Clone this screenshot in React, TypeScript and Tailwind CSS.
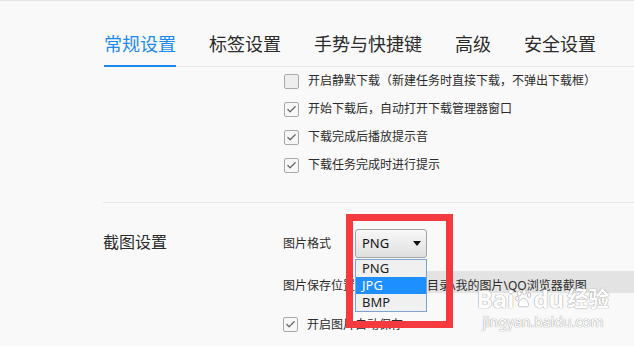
import { Check } from 'lucide-react'

const tabs = ['常规设置', '标签设置', '手势与快捷键', '高级', '安全设置']

const downloadOptions = [
  { label: '开启静默下载（新建任务时直接下载，不弹出下载框）', checked: false },
  { label: '开始下载后，自动打开下载管理器窗口', checked: true },
  { label: '下载完成后播放提示音', checked: true },
  { label: '下载任务完成时进行提示', checked: true },
]

const savePath = '：默认为系统目录\\我的图片\\QQ浏览器截图'

function CheckBox({ checked }: { checked: boolean }) {
  return (
    <span
      className={
        'flex h-[15px] w-[15px] shrink-0 items-center justify-center rounded-[2px] border border-[#a9a9a9] ' +
        (checked ? 'bg-[#f7f7f7]' : 'bg-[#eeeeee]')
      }
    >
      {checked && <Check size={11} strokeWidth={2.6} className="text-[#666]" />}
    </span>
  )
}

function FormatSelect() {
  const items = ['PNG', 'JPG', 'BMP']
  return (
    <div className="relative">
      <div className="flex h-[29px] w-[72px] items-center justify-between rounded-[3px] border border-[#a3a3a3] bg-gradient-to-b from-[#f7f7f7] to-[#e0e0e0] pl-[6px] pr-[5px] text-[13px] text-[#111]">
        <span>PNG</span>
        <span className="h-0 w-0 border-x-[4px] border-t-[5px] border-x-transparent border-t-[#111]" />
      </div>
      {/* open list */}
      <div className="absolute left-0 top-[30px] z-10 w-[72px] border border-[#7da2ce] bg-[#f0f0f0] text-[13px]">
        {items.map((it) => (
          <div
            key={it}
            className={
              'flex h-[17px] items-center pl-[6px] ' +
              (it === 'JPG' ? 'bg-[#1e8fff] text-white' : 'text-[#222]')
            }
          >
            {it}
          </div>
        ))}
      </div>
    </div>
  )
}

function Watermark() {
  return (
    <div className="pointer-events-none absolute left-[485px] top-[283px] z-30 flex w-[116px] flex-col items-center whitespace-nowrap text-white [text-shadow:0_0_1px_#9a9a9a,0_0_1px_#9a9a9a]">
      <div className="flex items-center text-[24px] font-bold leading-[29px]">
        <span>Bai</span>
        <svg width="17" height="19" viewBox="0 0 20 22" className="mx-[1px] shrink-0">
          <g fill="#fff" stroke="#b5b5b5" strokeWidth="0.9">
            <ellipse cx="5" cy="5" rx="2.2" ry="3" />
            <ellipse cx="11" cy="3.5" rx="2.2" ry="3" />
            <ellipse cx="16.5" cy="7" rx="2" ry="2.8" />
            <ellipse cx="2.5" cy="11" rx="2" ry="2.6" />
            <path d="M4 19c0-4 3-8 6-8s6 4 6 8c0 2-3 2-6 1.5C7 21 4 21 4 19z" />
          </g>
        </svg>
        <span>du</span>
        <span className="ml-[3px] text-[21px]">经验</span>
      </div>
      <div className="text-[14px] leading-[17px]">jingyan.baidu.com</div>
    </div>
  )
}

export default function App() {
  return (
    <div
      className="relative h-[346px] w-[634px] overflow-hidden border-t border-[#e3e3e3] bg-[#f9f9f9] text-[#2b2b2b]"
      style={{ fontFamily: '"Noto Sans", "Noto Sans CJK SC", sans-serif' }}
    >
      {/* tabs */}
      <div className="ml-[104px] flex gap-[33px] border-b border-[#e6e6e6] pt-[31px]">
        {tabs.map((t, i) => (
          <div
            key={t}
            className={
              '-mb-px border-b-2 pb-[9px] text-[18px] leading-[24px] ' +
              (i === 0 ? 'border-[#1b8af0] text-[#1b8af0]' : 'border-transparent text-[#2b2b2b]')
            }
          >
            {t}
          </div>
        ))}
      </div>

      {/* download options */}
      <div className="ml-[284px] flex flex-col text-[12px]">
        {downloadOptions.map((o) => (
          <label key={o.label} className="flex h-[28px] items-center gap-[9px]">
            <CheckBox checked={o.checked} />
            <span className="whitespace-nowrap">{o.label}</span>
          </label>
        ))}
      </div>

      <div className="ml-[103px] mt-[23px] h-px bg-[#e6e6e6]" />

      {/* screenshot settings */}
      <div className="ml-[103px] flex">
        <div className="w-[180px] shrink-0 pt-[28px] text-[16px] leading-[22px]">截图设置</div>
        <div className="flex w-[351px] flex-col pt-[26px] text-[12px]">
          <div className="flex h-[29px] items-center">
            <span className="w-[72px]">图片格式</span>
            <FormatSelect />
          </div>
          <div className="mt-[13px] flex">
            <div className="flex h-[22px] w-[72px] shrink-0 items-end whitespace-nowrap leading-[14px]">图片保存位置</div>
            <div className="flex h-[22px] w-[279px] shrink-0 items-end whitespace-nowrap bg-[#e3e3e3] leading-[14px]">
              {savePath}
            </div>
          </div>
          <label className="mt-[24px] flex h-[15px] items-center gap-[9px]">
            <CheckBox checked />
            <span>开启图片自动保存</span>
          </label>
        </div>
      </div>

      {/* annotation */}
      <div className="pointer-events-none absolute left-[346px] top-[213px] z-20 h-[114px] w-[107px] border-[7px] border-[#f53a3f]" />
      <Watermark />
    </div>
  )
}
